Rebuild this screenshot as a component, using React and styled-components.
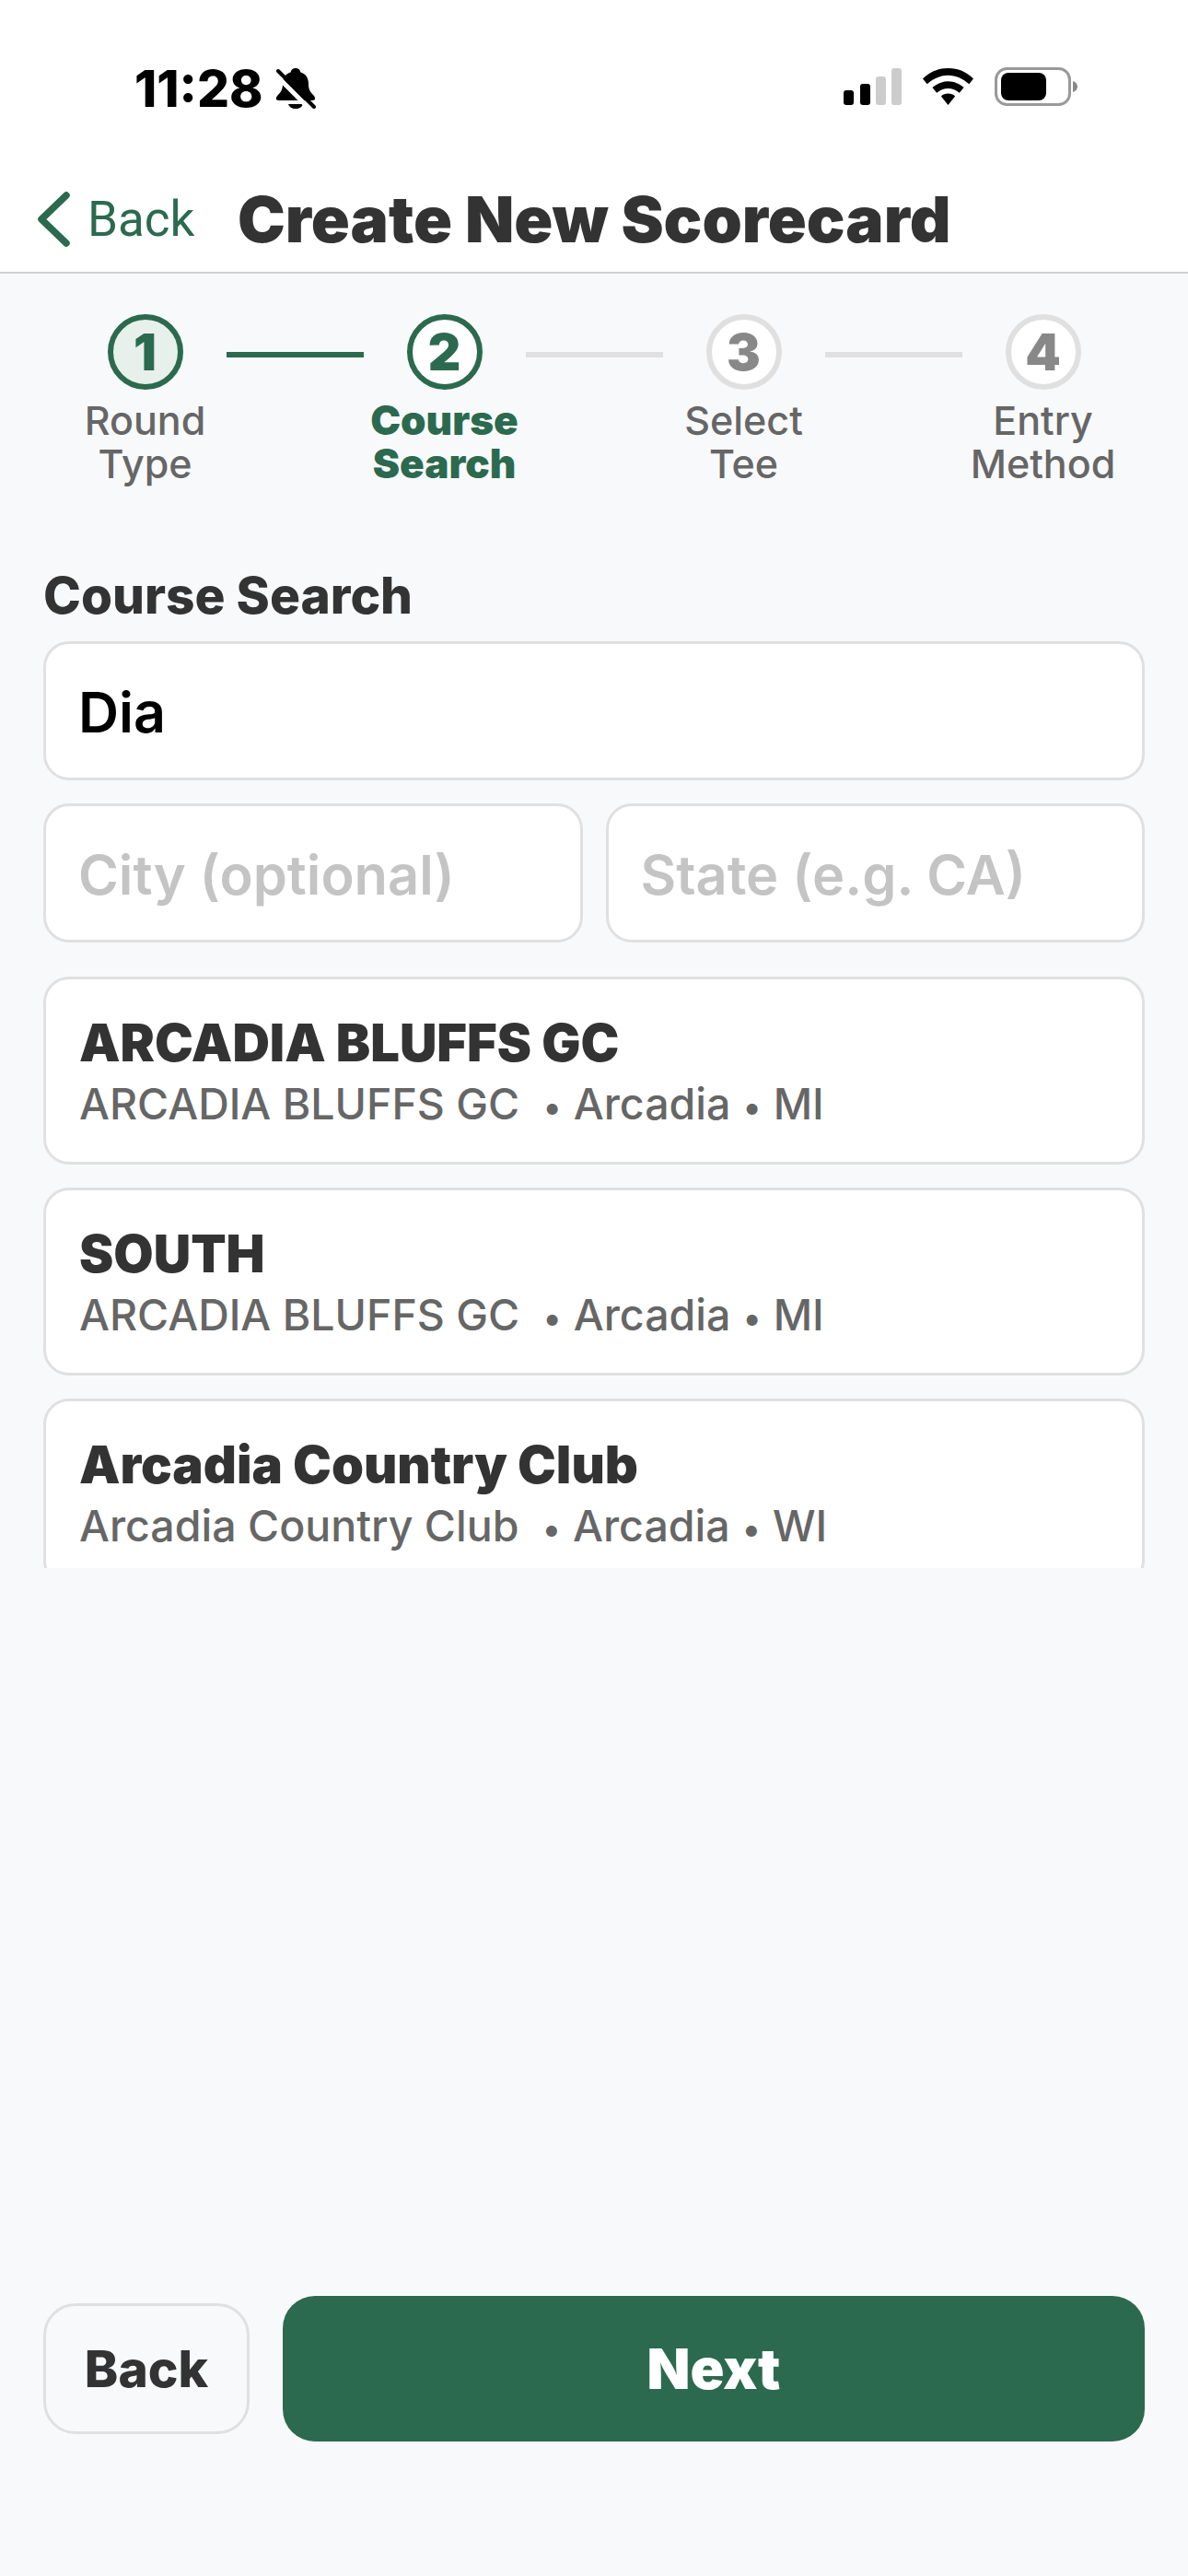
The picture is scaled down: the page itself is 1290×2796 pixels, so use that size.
import React from 'react'
import styled, { createGlobalStyle } from 'styled-components'

const GREEN = '#2b6a4e'
const DARK = '#333333'
const BORDER = '#e0e0e0'

const Global = createGlobalStyle`
  html, body { margin: 0; padding: 0; background: #f8f9fb; }
  * { box-sizing: border-box; }
  body { font-family: Inter, "Noto Sans", sans-serif; }
`

const Screen = styled.div`
  width: 1290px;
  height: 2796px;
  background: #f8f9fb;
  display: flex;
  flex-direction: column;
  overflow: hidden;
`

const TopArea = styled.header`
  background: #fff;
  border-bottom: 2px solid #d0d0d0;
  height: 297px;
  display: flex;
  flex-direction: column;
`

const StatusBar = styled.div`
  height: 193px;
  padding: 69px 0 0 146px;
  display: flex;
  align-items: flex-start;
  justify-content: space-between;
`

const TimeGroup = styled.div`
  display: flex;
  align-items: center;
  gap: 13px;
  height: 54px;
`

const Time = styled.span`
  font-size: 55px;
  font-weight: 800;
  color: #000;
  line-height: 54px;
`

const StatusIcons = styled.div`
  display: flex;
  align-items: center;
  gap: 23px;
  margin-top: 4px;
  padding-right: 120px;
`

const NavRow = styled.div`
  display: flex;
  align-items: center;
  padding-left: 40px;
  height: 90px;
`

const NavBack = styled.button`
  display: flex;
  align-items: center;
  gap: 19px;
  border: 0;
  background: none;
  padding: 0;
  color: ${GREEN};
  font-family: Roboto, sans-serif;
  font-size: 53px;
  width: 218px;
`

const Title = styled.h1`
  margin: 0;
  font-size: 69.4px;
  font-weight: 900;
  color: ${DARK};
`

const Stepper = styled.div`
  display: flex;
  justify-content: center;
  padding-top: 44px;
`

const Step = styled.div`
  width: 176px;
  display: flex;
  flex-direction: column;
  align-items: center;
`

const Circle = styled.div`
  width: 82px;
  height: 82px;
  border-radius: 50%;
  border: 6px solid ${p => (p.$state === 'todo' ? '#e0e0e0' : GREEN)};
  background: ${p => (p.$state === 'done' ? '#e8f0ec' : '#fff')};
  color: ${p => (p.$state === 'todo' ? '#888888' : GREEN)};
  display: flex;
  align-items: center;
  justify-content: center;
  font-size: 55px;
  font-weight: 900;
`

const StepLabel = styled.div`
  margin-top: 10px;
  text-align: center;
  font-size: ${p => (p.$active ? '44px' : '43px')};
  line-height: 47px;
  color: ${p => (p.$active ? GREEN : '#666666')};
  font-weight: ${p => (p.$active ? 900 : 500)};
`

const Connector = styled.div`
  width: 149px;
  height: 6px;
  margin-top: 41px;
  background: ${p => (p.$done ? GREEN : '#e0e0e0')};
`

const Form = styled.main`
  padding: 0 47px;
  display: flex;
  flex-direction: column;
`

const SectionLabel = styled.div`
  margin-top: 87px;
  font-size: 55px;
  line-height: 64px;
  font-weight: 800;
  color: ${DARK};
`

const Field = styled.div`
  height: 151px;
  flex: 1;
  background: #fff;
  border: 3px solid ${BORDER};
  border-radius: 28px;
  display: flex;
  align-items: center;
  padding: 2px 0 0 35px;
  font-size: ${p => (p.$placeholder ? '59.5px' : '61px')};
  font-weight: 600;
  color: ${p => (p.$placeholder ? '#c4c4c4' : '#000')};
`

const FieldRow = styled.div`
  display: flex;
  gap: 25px;
  margin-top: ${p => p.$top};
`

const ListViewport = styled.div`
  margin-top: 37px;
  height: 642px;
  overflow: hidden;
  display: flex;
  flex-direction: column;
  gap: 25px;
`

const Card = styled.div`
  flex: none;
  height: 204px;
  background: #fff;
  border: 3px solid ${BORDER};
  border-radius: 28px;
  padding: 35px 36px 0;
`

const CardTitle = styled.div`
  font-size: 56px;
  line-height: 68px;
  font-weight: 900;
  color: ${DARK};
`

const CardSub = styled.div`
  font-size: 46.5px;
  line-height: 64px;
  font-weight: 500;
  color: #666666;
  white-space: pre;
`

const Dot = styled.span`
  font-size: 38px;
  margin: 0 13px;
`

const Footer = styled.footer`
  margin-top: auto;
  padding: 0 47px 146px;
  display: flex;
  align-items: center;
  gap: 36px;
`

const BackButton = styled.button`
  width: 224px;
  height: 142px;
  border: 3px solid ${BORDER};
  border-radius: 35px;
  background: #f8f9fb;
  font-family: inherit;
  font-size: 55px;
  font-weight: 800;
  color: ${DARK};
`

const NextButton = styled.button`
  flex: 1;
  height: 158px;
  border: 0;
  border-radius: 35px;
  background: ${GREEN};
  font-family: inherit;
  font-size: 61px;
  font-weight: 900;
  color: #fff;
`

const steps = [
  { n: 1, label: ['Round', 'Type'], state: 'done' },
  { n: 2, label: ['Course', 'Search'], state: 'active' },
  { n: 3, label: ['Select', 'Tee'], state: 'todo' },
  { n: 4, label: ['Entry', 'Method'], state: 'todo' },
]

const results = [
  { title: 'ARCADIA BLUFFS GC', club: 'ARCADIA BLUFFS GC', city: 'Arcadia', state: 'MI' },
  { title: 'SOUTH', club: 'ARCADIA BLUFFS GC', city: 'Arcadia', state: 'MI' },
  { title: 'Arcadia Country Club', club: 'Arcadia Country Club', city: 'Arcadia', state: 'WI' },
]

function MutedBell() {
  return (
    <svg width="44" height="44" viewBox="0 0 44 44">
      <path d="M22 0c3 0 5 2 5.500 4.500C33 6 36 11 36 17c0 6 2 9 5 12 3 3 3 6-1 6H4c-4 0-4-3-1-6 3-3 5-6 5-12C8 11 11 6 16.500 4.500 17 2 19 0 22 0z" fill="#000" />
      <path d="M14 39h16c-1 3-4 5-8 5s-7-2-8-5z" fill="#000" />
      <path d="M-1 6l39 39" stroke="#fff" strokeWidth="5" />
      <path d="M3 3l39 39" stroke="#000" strokeWidth="4" strokeLinecap="round" />
    </svg>
  )
}

function SignalIcon() {
  return (
    <svg width="63" height="40" viewBox="0 0 63 40">
      <rect x="0" y="24" width="11" height="16" rx="3" fill="#000" />
      <rect x="18" y="17" width="11" height="23" rx="3" fill="#000" />
      <rect x="35" y="9" width="11" height="31" rx="3" fill="#cccccc" />
      <rect x="52" y="0" width="11" height="40" rx="3" fill="#cccccc" />
    </svg>
  )
}

function WifiIcon() {
  return (
    <svg width="55" height="40" viewBox="0 0 58 42">
      <path d="M29 0c11 0 21 4 29 12l-5 6C46 12 38 8 29 8S12 12 5 18l-5-6C8 4 18 0 29 0z" fill="#000" />
      <path d="M29 15c7 0 13 3 18 7l-5 6c-4-3-8-5-13-5s-9 2-13 5l-5-6c5-4 11-7 18-7z" fill="#000" />
      <path d="M29 29c3 0 6 1 8 3l-8 10-8-10c2-2 5-3 8-3z" fill="#000" />
    </svg>
  )
}

function BatteryIcon() {
  return (
    <svg width="90" height="42" viewBox="0 0 90 42">
      <rect x="1.500" y="1.500" width="80" height="39" rx="12" fill="none" stroke="#999999" strokeWidth="3" />
      <rect x="7" y="6" width="49" height="30" rx="8" fill="#000" />
      <path d="M85 15c3 1 5 3 5 6s-2 5-5 6z" fill="#888888" />
    </svg>
  )
}

function ChevronLeft() {
  return (
    <svg width="36" height="60" viewBox="0 0 36 60">
      <path d="M32 4L5 30l27 26" fill="none" stroke={GREEN} strokeWidth="7.500" strokeLinecap="round" strokeLinejoin="round" />
    </svg>
  )
}

export default function App() {
  return (
    <Screen>
      <Global />
      <TopArea>
        <StatusBar>
          <TimeGroup>
            <Time>11:28</Time>
            <MutedBell />
          </TimeGroup>
          <StatusIcons>
            <SignalIcon />
            <WifiIcon />
            <BatteryIcon />
          </StatusIcons>
        </StatusBar>
        <NavRow>
          <NavBack>
            <ChevronLeft />
            Back
          </NavBack>
          <Title>Create New Scorecard</Title>
        </NavRow>
      </TopArea>

      <Stepper>
        {steps.map((s, i) => (
          <React.Fragment key={s.n}>
            <Step>
              <Circle $state={s.state}>{s.n}</Circle>
              <StepLabel $active={s.state === 'active'}>
                {s.label[0]}
                <br />
                {s.label[1]}
              </StepLabel>
            </Step>
            {i < steps.length - 1 && <Connector $done={i === 0} />}
          </React.Fragment>
        ))}
      </Stepper>

      <Form>
        <SectionLabel>Course Search</SectionLabel>
        <FieldRow $top="18px">
          <Field>Dia</Field>
        </FieldRow>
        <FieldRow $top="25px">
          <Field $placeholder>City (optional)</Field>
          <Field $placeholder>State (e.g. CA)</Field>
        </FieldRow>
        <ListViewport>
          {results.map(r => (
            <Card key={r.title}>
              <CardTitle>{r.title}</CardTitle>
              <CardSub>
                {r.club} <Dot>•</Dot>{r.city}<Dot>•</Dot>{r.state}
              </CardSub>
            </Card>
          ))}
        </ListViewport>
      </Form>

      <Footer>
        <BackButton>Back</BackButton>
        <NextButton>Next</NextButton>
      </Footer>
    </Screen>
  )
}
